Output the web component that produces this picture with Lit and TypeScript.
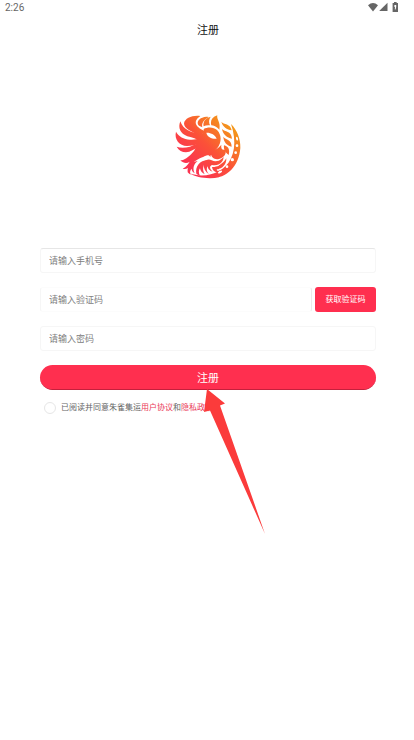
import { LitElement, html, css, svg } from "lit";
import { customElement, state } from "lit/decorators.js";

@customElement("status-bar")
export class StatusBar extends LitElement {
  static styles = css`
    :host {
      display: flex;
      align-items: center;
      justify-content: space-between;
      height: 15px;
      padding: 0 16px 0 5px;
      font: 10px/15px Roboto, sans-serif;
      color: #666;
    }
    svg {
      display: block;
    }
  `;

  render() {
    return html`
      <span>2:26</span>
      <svg width="30" height="11" viewBox="0 0 30 11" fill="#666" role="img" aria-label="状态图标">
        <path d="M0 3.2Q5-1.200 10 3.200L5 9.400Z" />
        <path d="M19.500 .8V9H11.200Z" />
        <path d="M26 0h2.600v1h1.400v9h-5.400V1h1.400Z" />
        <path d="M26.400 3h1.800v2l-.6 2.500h-.8l.2-2.500h-.6Z" fill="#fff" />
      </svg>
    `;
  }
}

const wing = svg`
  <path d="M80 8C56 5 34 14 31 30C31 47 54 54 78 68L96 54C70 44 53 27 80 8Z" />
  <path d="M20 24C12 44 20 61 41 69C58 74 68 75 80 86L90 72C76 57 59 60 43 51C31 44 24 36 20 24Z" />
  <path d="M7 55C1 78 17 97 40 98C58 98 68 91 84 94L92 80C76 72 66 81 49 79C30 77 15 70 7 55Z" />
  <path d="M9 100C17 115 33 119 47 115C60 111 68 101 84 104L90 90C72 86 62 96 49 100C34 104 21 105 9 100Z" />
`;

const body = svg`
  <path d="M72 62C84 66 92 58 90 47C102 40 121 41 130 50C144 64 145 87 131 104C121 117 112 117 110 131C106 123 100 125 90 130C74 136 62 142 50 158C44 165 36 169 27 166C38 160 43 153 48 145C40 151 29 150 20 141C34 141 43 131 53 122C66 111 64 100 78 96L78 74ZM98 58C101 71 114 77 129 76C125 64 110 57 98 58Z" />
  <path d="M111 119C113 137 130 144 148 131C155 126 158 118 156 108C146 113 141 105 143 94C134 106 125 110 116 111Z" />
`;

const crest = svg`
  <path d="M86 13C73 17 68 29 76 37L86 42C83 30 90 20 105 11C98 9 92 10 86 13Z" />
  <path d="M90 39C87 27 94 14 111 10C105 19 105 27 109 36C102 35 95 36 90 39Z" />
  <path d="M113 36C109 22 115 11 131 6C128 18 142 27 137 49C129 40 120 36 113 36Z" />
`;

const tail = svg`
  <path d="M143 25C150 34 171 30 174 51C160 48 147 41 143 25Z" />
  <path d="M145 47C154 57 172 51 175 76C160 73 148 64 145 47Z" />
  <path d="M149 70C157 81 174 77 174 100C160 96 150 87 149 70Z" />
  <path d="M151 96C164 99 169 108 165 125C155 118 149 108 151 96Z" />
`;

const plumes = svg`
  <path d="M42 177C40 157 52 145 72 143C60 152 56 165 63 180C58 177 54 172 54 166C49 171 48 177 51 184C47 182 44 180 42 177Z" />
  <path d="M68 181C64 158 79 142 101 140C89 151 84 167 93 183C85 179 80 172 79 165C75 171 74 178 79 187C75 186 71 184 68 181Z" />
  <path d="M89 148C97 138 106 136 114 141C126 147 139 143 150 131C148 151 132 158 115 155C107 158 107 166 117 175C107 172 102 166 102 159C98 165 98 173 106 183C95 176 89 164 89 148Z" />
  <path d="M115 161C133 162 147 152 158 135C159 154 146 166 130 168C127 172 134 174 144 171C131 181 117 177 115 161Z" />
`;

@customElement("phoenix-logo")
export class PhoenixLogo extends LitElement {
  static styles = css`
    :host,
    svg {
      display: block;
    }
  `;

  render() {
    return html`
      <svg width="70" height="68" viewBox="-2 -1 210 204" role="img" aria-label="朱雀集运">
        <defs>
          <linearGradient id="flame" gradientUnits="userSpaceOnUse" x1="53" y1="161" x2="178" y2="36">
            <stop offset="0" stop-color="#fb3450" />
            <stop offset=".45" stop-color="#fb5138" />
            <stop offset="1" stop-color="#f39a18" />
          </linearGradient>
        </defs>
        <g fill="url(#flame)" fill-rule="evenodd">
          ${wing}${body}${crest}${tail}${plumes}
          <path
            d="M172 32C190 50 201 76 200 104C196 159 160 196 108 195C84 194 64 191 48 180C84 193 127 186 155 159C183 132 190 84 172 32Z"
          />
        </g>
        <g fill="#fff">
          <ellipse cx="190" cy="76" rx="3" ry="6" transform="rotate(-12 190 76)" />
          <circle cx="190" cy="97" r="4" />
          <circle cx="186" cy="118" r="4" />
          <circle cx="176" cy="139" r="5" />
          <circle cx="160" cy="160" r="4" />
          <ellipse cx="139" cy="176" rx="7" ry="3" transform="rotate(-28 139 176)" />
        </g>
      </svg>
    `;
  }
}

@customElement("app-root")
export class AppRoot extends LitElement {
  static styles = css`
    :host {
      display: block;
      min-height: 100vh;
      background: #fff;
      color: #666;
      font-family: Roboto, "Noto Sans CJK SC", sans-serif;
    }
    * {
      box-sizing: border-box;
    }
    h1 {
      margin: 0;
      font-size: 11px;
      font-weight: 400;
      line-height: 32px;
      text-align: center;
      color: #111;
    }
    header,
    main {
      padding: 0 38px 0 40px;
    }
    .logo {
      display: flex;
      justify-content: center;
      padding: 66px 0 67px;
    }
    form {
      display: flex;
      flex-direction: column;
      gap: 14px;
    }
    .code {
      display: flex;
      gap: 3px;
    }
    input,
    button {
      font-family: inherit;
    }
    .field {
      flex: 1;
      width: 100%;
      min-width: 0;
      height: 25px;
      min-height: 25px;
      padding: 0 8px;
      border: 1px solid #f6f6f6;
      border-radius: 3px;
      background: #fff;
      font-size: 9px;
      color: #333;
      outline: none;
    }
    .phone {
      border-top-color: #e6e6e6;
    }
    .code .field {
      border-color: #fcfcfc #ebebeb #fcfcfc #f6f6f6;
    }
    .field::placeholder {
      color: #808080;
      opacity: 1;
    }
    button {
      border: 0;
      background: #ff2f4f;
      color: #fff;
      cursor: pointer;
    }
    .send {
      width: 61px;
      height: 25px;
      padding: 0 0 2px;
      border-radius: 3px;
      font-size: 8px;
    }
    .submit {
      height: 25px;
      padding: 0;
      border-radius: 13px;
      border-bottom: 1px solid #c4203c;
      font-size: 11px;
    }
    .consent {
      position: relative;
      display: flex;
      align-items: center;
      gap: 5px;
      margin-top: 11px;
      padding-left: 4px;
      font-size: 8px;
      line-height: 14px;
    }
    .consent input {
      appearance: none;
      width: 12px;
      height: 12px;
      margin: 0;
      border: 1px solid #e6e6e6;
      border-radius: 50%;
    }
    .consent input:checked {
      background: #ff2f4f;
    }
    a {
      color: #ea3a58;
      text-decoration: none;
    }
    .pointer {
      position: absolute;
      top: -12px;
      left: 163px;
      pointer-events: none;
    }
  `;

  @state() private agreed = false;

  render() {
    return html`
      <status-bar></status-bar>
      <header><h1>注册</h1></header>
      <main>
        <div class="logo"><phoenix-logo></phoenix-logo></div>
        <form @submit=${(e: Event) => e.preventDefault()}>
          <input class="field phone" type="tel" placeholder="请输入手机号" aria-label="手机号" />
          <div class="code">
            <input class="field" type="text" placeholder="请输入验证码" aria-label="验证码" />
            <button class="send" type="button">获取验证码</button>
          </div>
          <input class="field" type="password" placeholder="请输入密码" aria-label="密码" />
          <button class="submit" type="submit">注册</button>
        </form>
        <div class="consent">
          <input
            id="agree"
            type="checkbox"
            .checked=${this.agreed}
            @change=${(e: Event) => (this.agreed = (e.target as HTMLInputElement).checked)}
          />
          <span
            ><label for="agree">已阅读并同意朱雀集运</label><a href="#terms">用户协议</a>和<a href="#privacy">隐私政策</a></span
          >
          <svg class="pointer" width="64" height="146" viewBox="0 0 64 146" aria-hidden="true">
            <path d="M4 0L22 14.500L17 16.500L62 145L7 21.500L1 23Z" fill="#fb3b3b" />
          </svg>
        </div>
      </main>
    `;
  }
}
